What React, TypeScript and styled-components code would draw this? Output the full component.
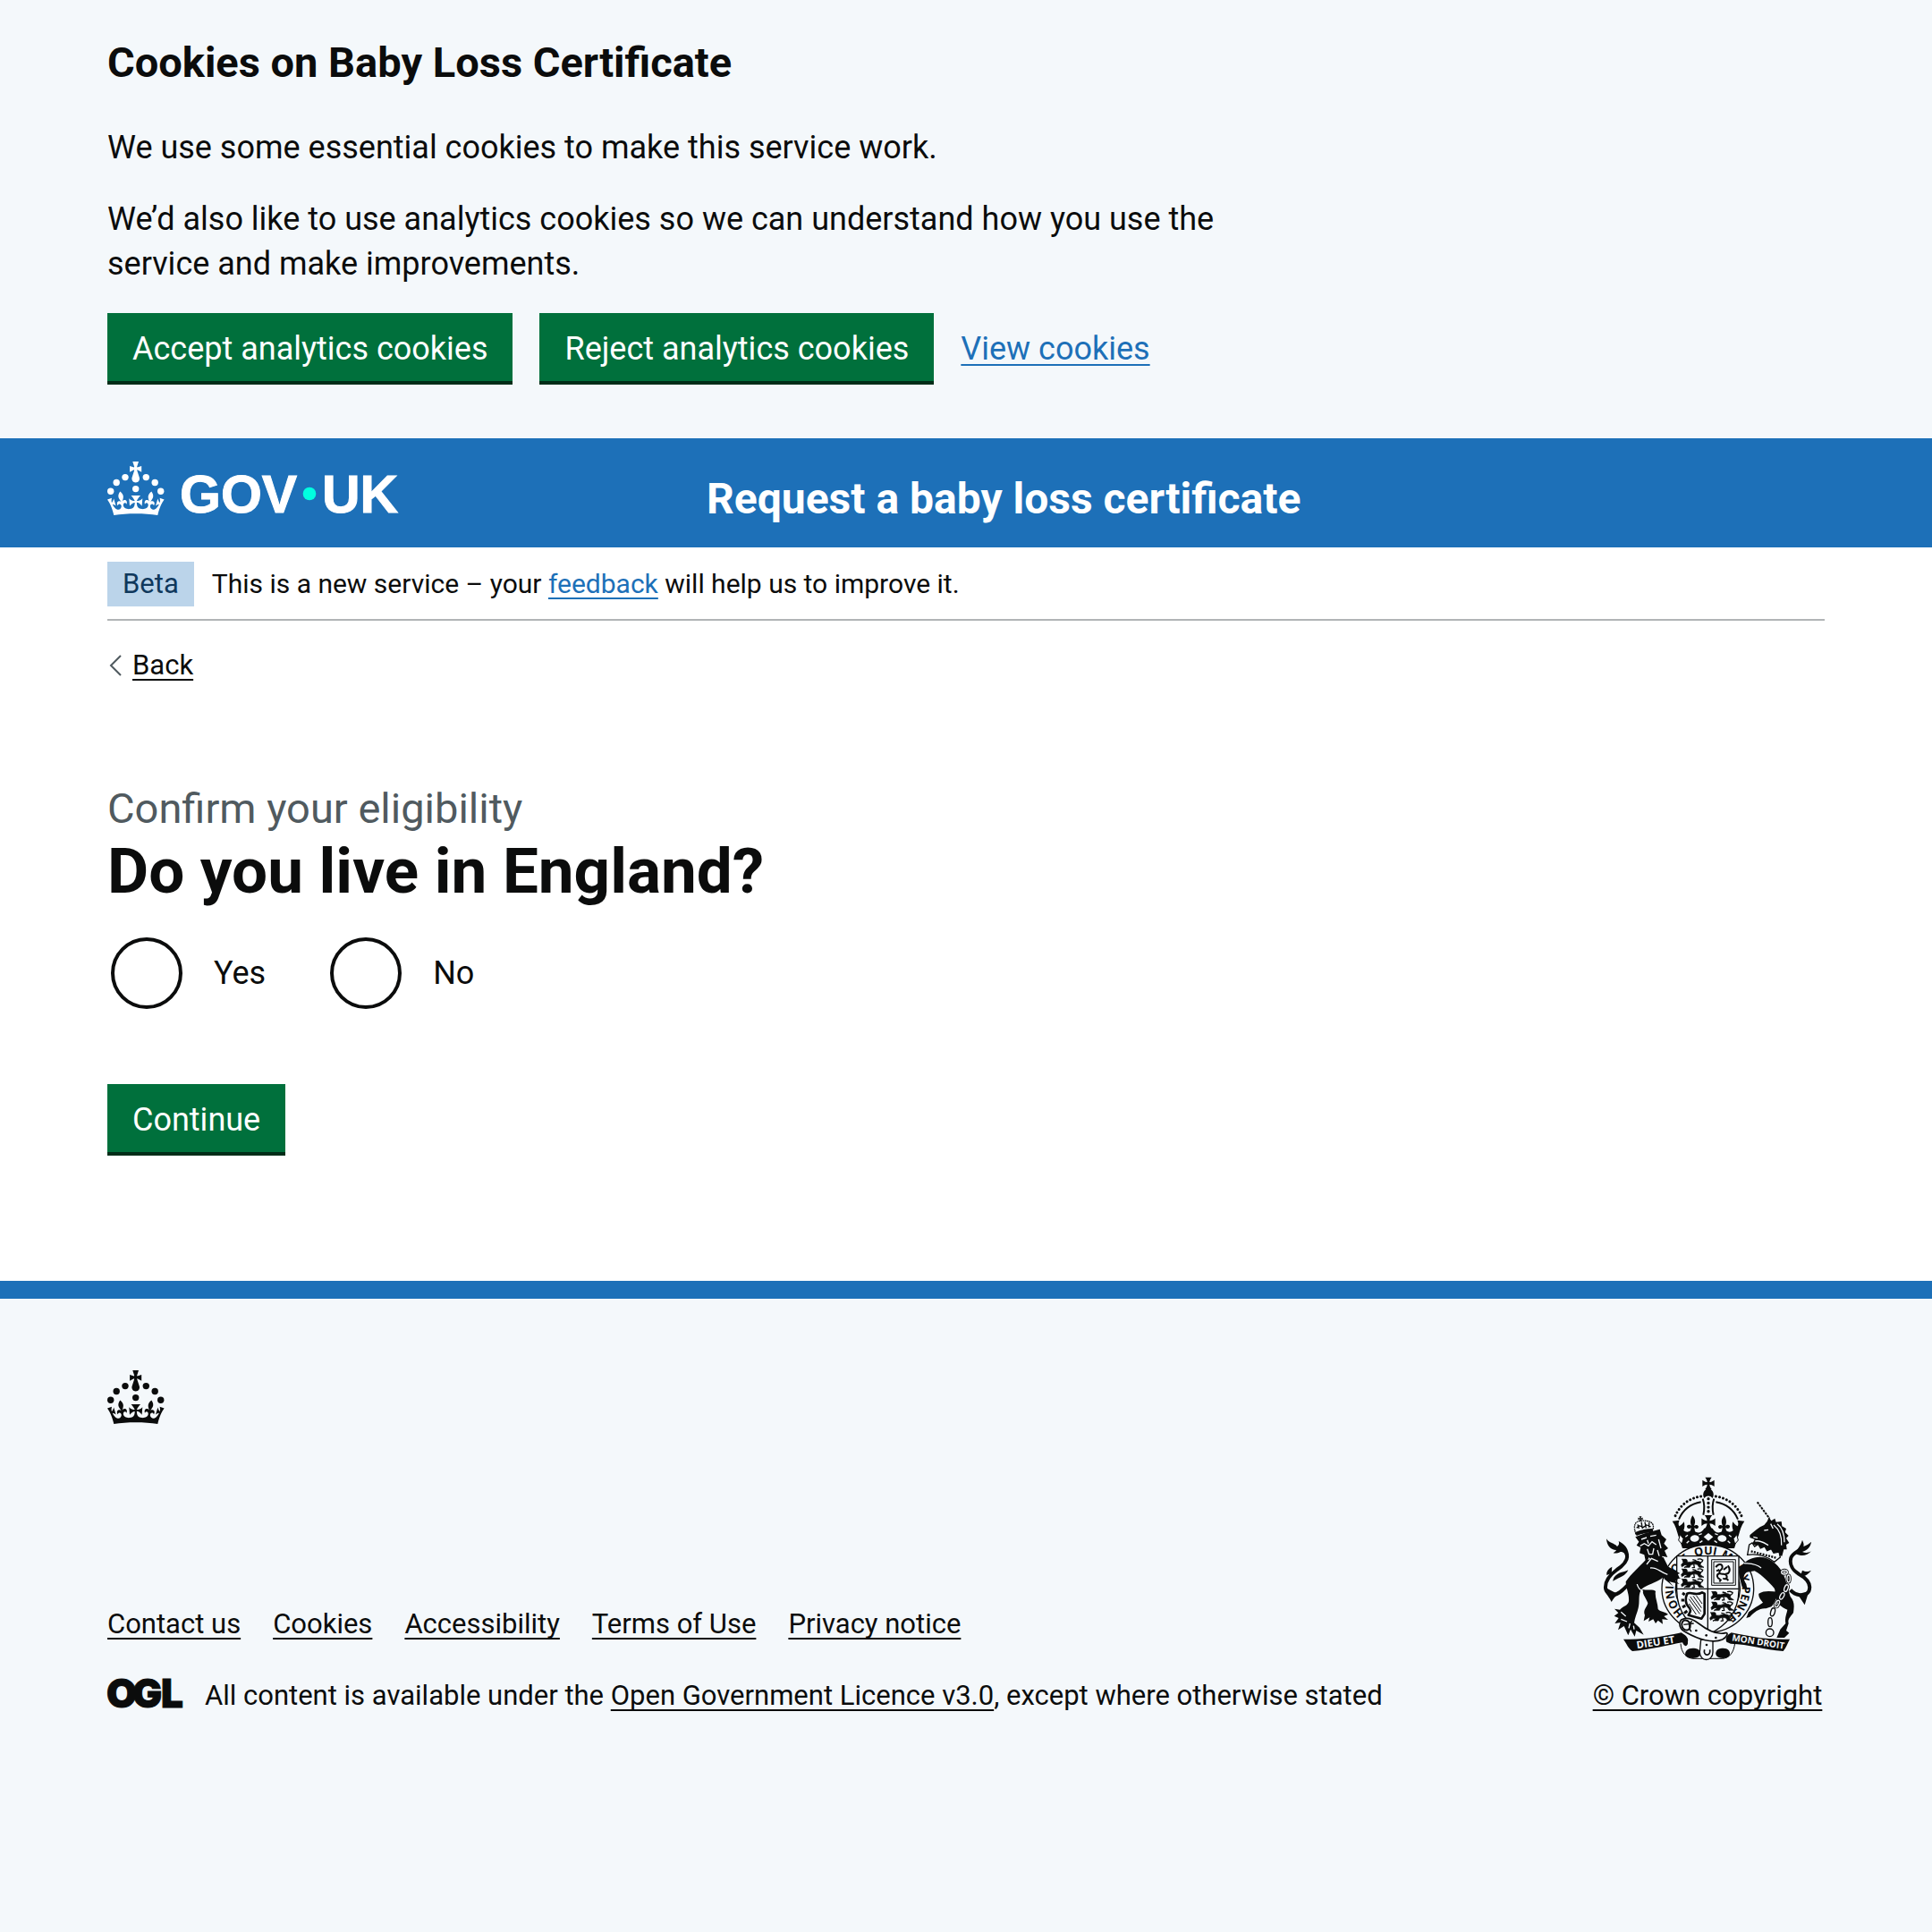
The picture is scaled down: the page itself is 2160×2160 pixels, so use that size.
import React from "react";
import styled, { createGlobalStyle } from "styled-components";

const colour = {
  text: "#0b0c0c",
  secondary: "#505a5f",
  blue: "#1d70b8",
  surface: "#f4f8fb",
  border: "#b1b4b6",
  green: "#00703c",
  greenShadow: "#002d18",
};

const GlobalStyle = createGlobalStyle`
  *, *::before, *::after { box-sizing: border-box; }
  html { background: ${colour.surface}; }
  body {
    margin: 0;
    color: ${colour.text};
    font-family: Roboto, "Liberation Sans", Arial, sans-serif;
    font-size: 36px;
    line-height: 50px;
  }
  h1, h2, p, ul, fieldset { margin: 0; padding: 0; }
`;

const Page = styled.div`
  display: flex;
  flex-direction: column;
  min-height: 100vh;
  background: #fff;
`;

const Container = styled.div`
  width: 100%;
  max-width: 2160px;
  margin: 0 auto;
  padding: 0 120px;
`;

const Link = styled.a<{ $tone?: "text" | "link" }>`
  color: ${(p) => (p.$tone === "link" ? colour.blue : colour.text)};
  text-decoration: underline;
  text-decoration-thickness: 2px;
  text-underline-offset: 5px;
  text-decoration-skip-ink: none;
`;

const Button = styled.button`
  height: 76px;
  margin: 0 0 4px;
  padding: 3px 28px 0;
  border: 0;
  border-radius: 0;
  background: ${colour.green};
  box-shadow: 0 4px 0 ${colour.greenShadow};
  color: #fff;
  font: inherit;
  cursor: pointer;
`;

/* Cookie banner */

const CookieBanner = styled.section`
  padding: 40px 0 60px;
  background: ${colour.surface};
`;

const CookieTitle = styled.h2`
  margin-bottom: 40px;
  font-size: 47px;
  line-height: 60px;
`;

const CookieCopy = styled.div`
  display: grid;
  gap: 30px;
  max-width: 1290px;
  margin-bottom: 30px;
`;

const CookieActions = styled.div`
  display: flex;
  flex-wrap: wrap;
  align-items: center;
  gap: 30px;
`;

/* Header */

const Header = styled.header`
  padding: 26px 0 24px;
  background: ${colour.blue};
  color: #fff;
`;

const HeaderGrid = styled.div`
  display: grid;
  grid-template-columns: 1fr 2fr;
`;

const HomeLink = styled.a`
  display: block;
  height: 72px;
  color: inherit;
`;

const ServiceName = styled.a`
  margin: 12px 0 0 30px;
  color: inherit;
  font-size: 48px;
  font-weight: 700;
  line-height: 60px;
  text-decoration: none;
`;

/* Phase banner and back link */

const PhaseBanner = styled.div`
  display: flex;
  align-items: center;
  gap: 20px;
  padding: 16px 0 14px;
  border-bottom: 2px solid ${colour.border};
  font-size: 30px;
`;

const PhaseTag = styled.strong`
  padding: 0 17px;
  background: #bbd4ea;
  color: #0f385c;
  font-size: 31px;
  font-weight: 400;
`;

const BackRow = styled.nav`
  display: flex;
  align-items: center;
  gap: 12px;
  margin-top: 30px;
  font-size: 31px;
  line-height: 40px;
`;

const BackArrow = styled.svg`
  width: 16px;
  height: 24px;
`;

/* Question */

const Main = styled.main`
  padding: 110px 0 140px;
`;

const Caption = styled.span`
  display: block;
  margin-bottom: 2px;
  color: ${colour.secondary};
  font-size: 47px;
  line-height: 60px;
`;

const Question = styled.fieldset`
  min-width: 0;
  border: 0;
`;

const Legend = styled.legend`
  padding: 0;
`;

const Title = styled.h1`
  font-size: 71px;
  line-height: 76px;
`;

const Options = styled.div`
  display: flex;
  flex-wrap: wrap;
  gap: 72px;
  margin: 36px 0 84px;
  padding-left: 4px;
`;

const Option = styled.label`
  display: flex;
  align-items: center;
  gap: 35px;
  cursor: pointer;
`;

const Radio = styled.input`
  appearance: none;
  width: 80px;
  height: 80px;
  margin: 0;
  border: 4px solid ${colour.text};
  border-radius: 50%;
  background: #fff;
  &:checked { box-shadow: inset 0 0 0 16px #fff; background: ${colour.text}; }
`;

/* Footer */

const Footer = styled.footer`
  flex: 1;
  padding: 80px 0;
  border-top: 20px solid ${colour.blue};
  background: ${colour.surface};
  font-size: 31px;
  line-height: 40px;
`;

const CrownMark = styled.svg`
  display: block;
  width: 64px;
  height: 60px;
`;

const FooterMeta = styled.div`
  display: flex;
  align-items: flex-end;
  justify-content: space-between;
  gap: 60px;
  margin-top: 59px;
`;

const FooterLinks = styled.ul`
  display: flex;
  flex-wrap: wrap;
  gap: 20px 36px;
  margin-bottom: 40px;
  list-style: none;
`;

const Licence = styled.div`
  display: flex;
  align-items: center;
  gap: 27px;
`;

const OglMark = styled.svg`
  flex: none;
  width: 82px;
  height: 40px;
  overflow: visible;
`;

const Copyright = styled.div`
  display: flex;
  flex: none;
  flex-direction: column;
  align-items: center;
  gap: 21px;
  min-width: 262px;
`;

const CrestImage = styled.svg`
  display: block;
  width: 250px;
  height: 204px;
  overflow: visible;
`;

function CrownShape() {
  return (
    <g fill="currentColor">
      <circle cx="20" cy="17.6" r="3.7" />
      <circle cx="10.2" cy="23.5" r="3.7" />
      <circle cx="3.7" cy="33.2" r="3.7" />
      <circle cx="31.7" cy="30.6" r="3.7" />
      <circle cx="43.3" cy="17.6" r="3.7" />
      <circle cx="53.2" cy="23.5" r="3.7" />
      <circle cx="59.7" cy="33.2" r="3.7" />
      <path d="M33.1,9.8c.2-.1.3-.3.5-.5l4.6,2.4v-6.8l-4.6,1.5c-.1-.2-.3-.3-.5-.5l1.9-5.9h-6.7l1.9,5.9c-.2.1-.3.3-.5.5l-4.6-1.5v6.8l4.6-2.4c.1.2.3.3.5.5l-2.6,8c-.9,2.8,1.2,5.7,4.1,5.7h0c3,0,5.1-2.9,4.1-5.7l-2.6-8ZM37,37.9s-3.4,3.8-4.1,6.1c2.2,0,4.2-.5,6.4-2.8l-.7,8.5c-2-2.8-4.4-4.1-5.7-3.8.1,3.1.5,6.7,5.8,7.2,3.7.3,6.7-1.5,7-3.8.4-2.6-2-4.3-3.7-1.6-1.4-4.5,2.4-6.1,4.9-3.2-1.9-4.5-1.8-7.7,2.4-10.9,3,4,2.6,7.3-1.2,11.1,2.4-1.3,6.2,0,4,4.6-1.2-2.8-3.7-2.2-4.2.2-.3,1.7.7,3.7,3,4.2,1.9.3,4.7-.9,7-5.9-1.3,0-2.4.7-3.9,1.7l2.4-8c.6,2.3,1.4,3.7,2.2,4.5.6-1.6.5-2.8,0-5.3l5,1.8c-2.6,3.6-5.2,8.7-7.3,17.5-7.4-1.1-15.7-1.7-24.5-1.7h0c-8.8,0-17.1.6-24.5,1.7-2.1-8.9-4.7-13.9-7.3-17.5l5-1.8c-.5,2.5-.6,3.7,0,5.3.8-.8,1.6-2.3,2.2-4.5l2.4,8c-1.5-1-2.6-1.7-3.9-1.7,2.3,5,5.2,6.2,7,5.9,2.3-.4,3.3-2.4,3-4.2-.5-2.4-3-3.1-4.2-.2-2.2-4.6,1.6-6,4-4.6-3.7-3.7-4.2-7.1-1.2-11.1,4.2,3.2,4.3,6.4,2.4,10.9,2.5-2.8,6.3-1.3,4.9,3.2-1.8-2.7-4.1-1-3.7,1.6.3,2.3,3.3,4.1,7,3.8,5.4-.5,5.7-4.2,5.8-7.2-1.3-.2-3.7,1-5.7,3.8l-.7-8.5c2.2,2.3,4.2,2.7,6.4,2.8-.7-2.3-4.1-6.1-4.1-6.1h10.6,0Z" />
    </g>
  );
}

function GovUkLogo() {
  return (
    <svg width="330" height="72" viewBox="0 0 330 72" role="img" aria-label="GOV.UK">
      <CrownShape />
      <g fill="currentColor" stroke="currentColor" strokeWidth="1" fontFamily='"Liberation Sans", Arial, sans-serif' fontSize="59" fontWeight="700">
        <text x="81" y="57">GOV</text>
        <text x="240" y="57">UK</text>
      </g>
      <circle cx="226" cy="36" r="7.3" fill="#00ffe0" />
    </svg>
  );
}

/* A lion passant, as it appears three times in the quarters of England. */
function PassantLion({ x, y }: { x: number; y: number }) {
  return (
    <g transform={`translate(${x} ${y})`}>
      <circle cx="15" cy="9" r="8" />
      <path d="M4 2 L12 3 L10 12 Z M8 14 C20 8 30 16 42 10 C54 6 62 10 68 14 L66 22 L78 30 L62 30 L56 21 C46 18 40 20 34 22 L30 30 L18 30 L24 23 L14 22 L4 28 L2 21 Z" stroke={colour.text} strokeWidth="2" />
      <path d="M66 14 C82 8 70 -1 56 3 M40 4 L52 7 M66 2 L76 6 M24 24 L12 31 M44 20 L46 30 L38 31" fill="none" stroke={colour.text} strokeWidth="4" />
    </g>
  );
}

function CrossPattee({ x, y, s }: { x: number; y: number; s: number }) {
  return (
    <path
      transform={`translate(${x} ${y}) scale(${s})`}
      d="M-11 -20 H11 C6 -14 4 -8 4 -4 C8 -4 14 -6 20 -11 V11 C14 6 8 4 4 4 C4 8 6 14 11 20 H-11 C-6 14 -4 8 -4 4 C-8 4 -14 6 -20 11 V-11 C-14 -6 -8 -4 -4 -4 C-4 -8 -6 -14 -11 -20 Z"
    />
  );
}

/* One side of the imperial crown; the other side is its mirror image. */
function CrownHalf() {
  return (
    <g>
      <path d="M428 126 C385 132 352 160 338 202" fill="none" stroke={colour.text} strokeWidth="9" strokeLinecap="round" strokeDasharray="0.1 12.4" />
      <path d="M428 145 C393 151 367 173 354 203" fill="none" stroke={colour.text} strokeWidth="6" />
      <path d="M434 134 C440 150 440 170 436 188" stroke={colour.text} strokeWidth="6" fill="none" />
      <path d="M332 209 L356 206 C352 214 352 220 355 226 C362 222 368 216 371 211 C374 221 374 231 370 240 C376 246 386 247 393 241 L395 231 C389 237 380 234 381 225 C386 219 392 221 396 225 C390 212 394 200 400 190 C409 201 411 212 405 225 C411 220 418 222 420 227 C420 235 412 237 406 231 L408 243 C418 252 432 246 439 233 L454 233 L454 300 L366 300 C362 290 360 276 352 258 C347 240 343 224 332 209 Z" />
      <path d="M358 254 L369 268 L364 286 L353 273 Z" fill={colour.surface} stroke={colour.text} strokeWidth="3" />
      <ellipse cx="407" cy="267" rx="15" ry="11" fill={colour.surface} transform="rotate(-6 407 267)" />
      <path d="M376 262 L384 256 M380 283 L388 275 M421 255 L431 251 M424 281 L433 275" stroke={colour.surface} strokeWidth="4" />
    </g>
  );
}

function RoyalArms() {
  return (
    <CrestImage viewBox="75 60 750 612" fill={colour.text} aria-hidden="true">
      {/* Imperial crown */}
      <CrossPattee x={453} y={82} s={1} />
      <path d="M453 98 C470 103 474 120 467 132 C459 122 447 122 439 132 C432 120 436 103 453 98 Z" />
      <CrownHalf />
      <g transform="translate(906 0) scale(-1 1)">
        <CrownHalf />
      </g>
      <path d="M453 134 V186" stroke={colour.text} strokeWidth="10" strokeLinecap="round" strokeDasharray="0.1 14" />
      <CrossPattee x={453} y={212} s={1.15} />
      <path d="M453 249 L469 262 L453 275 L437 262 Z" fill={colour.surface} />

      {/* Garter */}
      <ellipse cx="451" cy="435" rx="154" ry="147" fill={colour.surface} stroke={colour.text} strokeWidth="4" />
      <ellipse cx="451" cy="435" rx="108" ry="106" fill={colour.surface} stroke={colour.text} strokeWidth="4" />
      <path id="garter" d="M451 549 A115 114 0 0 1 451 321 A115 114 0 0 1 451 549" fill="none" />
      <g fontFamily='"Open Sans", "Noto Sans", sans-serif' fontSize="38" fontWeight="700">
        <text><textPath href="#garter" startOffset="12%">HONI</textPath></text>
        <text><textPath href="#garter" startOffset="29%">SOIT</textPath></text>
        <text><textPath href="#garter" startOffset="44%">QUI</textPath></text>
        <text><textPath href="#garter" startOffset="56%">MAL</textPath></text>
        <text><textPath href="#garter" startOffset="69%">Y</textPath></text>
        <text><textPath href="#garter" startOffset="74%">PENSE</textPath></text>
      </g>

      {/* Shield */}
      <path d="M347 326 H555 V436 C556 510 515 560 451 590 C386 560 346 510 347 436 Z" fill={colour.surface} stroke={colour.text} strokeWidth="4" />
      <path d="M451 326 V590 M347 436 H555" stroke={colour.text} strokeWidth="4" fill="none" />
      <PassantLion x={360} y={334} />
      <PassantLion x={360} y={367} />
      <PassantLion x={360} y={401} />
      <PassantLion x={460} y={443} />
      <PassantLion x={460} y={478} />
      <PassantLion x={456} y={513} />
      <path d="M464 338 H544 V424 H464 Z" fill="none" stroke={colour.text} strokeWidth="3" />
      <path d="M471 345 H537 V417 H471 Z" fill="none" stroke={colour.text} strokeWidth="3" />
      <path d="M478 364 C486 350 500 352 500 364 C500 374 488 372 490 382 C494 392 508 380 514 392 C518 402 508 406 502 400 M490 384 C478 388 482 400 492 404 M504 372 L516 362 M510 386 C526 386 528 368 518 358 M480 376 L490 372 M496 404 L490 412 M512 400 L520 408" fill="none" stroke={colour.text} strokeWidth="6" />
      <path d="M382 452 C396 444 410 462 432 448 L440 452 V520 L430 536 L386 524 C394 512 396 506 386 496 C376 486 374 468 382 452 Z" fill="none" stroke={colour.text} strokeWidth="8" strokeLinejoin="round" />
      <path d="M388 470 L424 520 M392 462 L428 512 M402 460 L430 500 M412 458 L432 486 M388 486 L412 522" stroke={colour.text} strokeWidth="3" />
      <path d="M374 456 L366 450 M372 474 L362 474 M376 492 L366 498 M382 510 L372 518" stroke={colour.text} strokeWidth="9" />

      {/* Scroll and buckle of the garter */}
      <path d="M360 620 C362 650 378 668 402 670 H500 C524 668 538 650 542 618" fill={colour.surface} stroke={colour.text} strokeWidth="3" />
      <path d="M376 660 C372 642 388 632 410 636 C426 638 432 656 420 664 C408 672 384 670 376 660 Z" />
      <path d="M524 660 C530 642 514 632 494 636 C478 638 472 656 484 664 C496 672 516 670 524 660 Z" />
      <path d="M428 606 H468 V648 C468 682 424 682 424 648 Z" fill={colour.surface} stroke={colour.text} strokeWidth="4" />
      <path d="M440 640 C434 662 462 664 458 640" fill="none" stroke={colour.text} strokeWidth="5" />
      <path d="M362 540 C382 528 404 540 420 552 C446 572 480 592 510 584 C524 582 512 600 500 606 C468 620 420 606 378 582 C356 572 352 552 362 540 Z" fill={colour.surface} stroke={colour.text} strokeWidth="5" />
      <ellipse cx="378" cy="558" rx="14" ry="17" fill="none" stroke={colour.text} strokeWidth="6" transform="rotate(-20 378 558)" />
      <path d="M370 556 L404 552 M398 544 C386 552 386 570 396 580" stroke={colour.text} strokeWidth="4" fill="none" />
      <circle cx="412" cy="576" r="4" />
      <circle cx="446" cy="592" r="4" />
      <circle cx="447" cy="624" r="4" />
      <circle cx="478" cy="600" r="4" />

      {/* Lion */}
      <path d="M150 306 C164 300 174 308 178 318 C186 336 170 356 146 372 C124 388 106 408 108 434 C112 458 138 462 158 446 C176 432 196 410 214 388" fill="none" stroke={colour.text} strokeWidth="12" />
      <path d="M111 268 C120 284 138 282 147 294 C153 290 155 284 152 276 C170 284 188 302 186 332 C178 316 166 312 158 312 C150 316 142 318 134 316 C138 312 142 310 144 306 C126 306 112 292 111 268 Z" />
      <path d="M136 398 C152 378 166 382 184 373 C176 392 156 398 132 410 Z M112 390 C110 378 118 368 130 362 L128 384 Z M104 430 C106 452 122 466 128 480 C134 470 140 462 150 454 Z" />
      <path d="M242 340 C222 362 194 386 176 412 C176 434 188 452 186 478 C184 492 168 494 156 506 L138 503 L151 517 L137 527 L152 534 L139 552 L158 549 L150 574 L170 561 L184 592 L192 572 L206 596 L211 576 L236 590 L222 566 L204 550 C206 532 214 518 218 500 C224 478 216 458 228 438 C246 420 276 418 300 398 L340 412 L356 398 L346 378 L318 362 L302 330 Z" />
      <path d="M232 438 C250 442 268 436 276 444 C272 462 284 484 284 504 C294 516 306 510 318 522 L304 528 L318 540 L298 538 L300 554 L284 542 L276 552 L268 538 L252 546 L256 532 L236 544 L240 524 C232 508 248 496 250 484 C244 466 232 456 232 438 Z" />
      <path d="M318 362 L358 384 L336 392 L362 402 L334 402 L356 420 L322 412 L336 428 L304 402 Z" />
      <path d="M208 262 L240 250 L290 236 L296 256 L312 270 L304 284 L318 300 L306 308 L316 330 L298 326 L300 344 L280 336 L268 350 L254 330 L244 350 L238 322 L222 316 L226 298 L212 290 L220 278 Z" />
      <path d="M228 270 L246 264 M258 260 L278 256 M224 292 L238 284 L252 292 L264 278 L278 288 M248 302 L254 320 L266 320 L270 300 M286 270 L294 300 M282 306 L288 326 M248 272 L252 284 M246 354 L262 334 L284 344" fill="none" stroke={colour.surface} strokeWidth="4" />
      <path d="M210 252 C200 226 206 210 224 208 C240 206 256 208 264 216 C272 226 268 238 262 244 Z" fill={colour.surface} stroke={colour.text} strokeWidth="4" strokeDasharray="5 2" />
      <path d="M208 246 C226 238 246 234 266 234 L268 246 C246 246 228 252 212 258 Z" />
      <path d="M216 220 L220 234 M228 212 L232 234 M240 212 L244 232 M254 214 L254 230 M212 232 L222 224 L234 230 L246 222 L260 228" fill="none" stroke={colour.text} strokeWidth="4" />
      <CrossPattee x={225} y={201} s={0.4} />
      <path d="M214 420 C216 432 222 438 232 444 C226 456 228 470 224 484 M258 366 C280 362 290 380 316 388" fill="none" stroke={colour.surface} strokeWidth="4" />
      <path d="M160 514 L176 528 M160 538 L180 546 M186 568 L190 552 M204 572 L202 560" stroke={colour.surface} strokeWidth="4" />

      {/* Unicorn */}
      <path d="M617 145 L658 200" stroke={colour.text} strokeWidth="6" strokeDasharray="8 3" />
      <path d="M592 256 C606 244 620 230 640 222 L650 210 L656 196 L664 208 L676 200 L680 212 L698 210 L700 226 L714 234 L710 246 L722 258 L714 266 L724 282 L714 288 L716 304 L706 304 L700 326 L684 322 C664 308 640 302 622 294 L600 286 L608 270 L592 264 Z" />
      <path d="M590 288 L600 282 L608 294 L620 286 L628 300 L642 294 L650 308 L664 302 L672 316 L690 312 L694 330 L674 346 C648 326 614 318 584 322 Z" fill={colour.surface} stroke={colour.text} strokeWidth="4" />
      <path d="M596 310 L680 332" stroke={colour.text} strokeWidth="7" strokeDasharray="6 4" />
      <path d="M640 240 L654 238 M604 262 L618 266 M610 276 C628 272 640 282 654 290 M672 222 C690 236 700 260 698 290 M684 218 C702 232 708 256 708 280 M662 218 L670 234" fill="none" stroke={colour.surface} strokeWidth="4" />
      <path d="M566 356 C586 334 622 320 654 336 C688 352 706 382 714 414 C722 432 722 448 728 462 C744 480 740 500 738 516 C728 530 718 538 722 552 L714 576 L724 584 L708 600 L682 600 L694 572 L712 552 C708 532 716 520 718 506 C700 498 688 490 680 470 C672 454 680 444 674 434 C656 414 636 392 608 376 L582 380 C566 390 572 408 580 420 L584 440 L566 430 L558 400 C554 380 552 366 566 356 Z" />
      <path d="M622 452 C640 440 664 444 684 446 C684 466 676 482 664 496 L646 502 C624 500 608 514 592 530 L580 534 L588 514 C602 502 620 494 636 482 C628 472 620 464 622 452 Z" />
      <path d="M572 350 C590 352 612 350 630 366" fill="none" stroke={colour.surface} strokeWidth="4" />
      <path d="M728 440 C742 456 776 468 790 444 C800 418 778 398 756 386 C736 374 724 354 730 332 C736 316 752 312 766 300" fill="none" stroke={colour.text} strokeWidth="12" />
      <path d="M798 278 C792 284 782 290 772 294 C774 286 772 282 768 272 C762 294 750 300 746 318 C764 328 784 326 798 310 C788 316 778 316 768 312 C782 306 796 298 798 278 Z M798 374 C788 378 780 380 768 374 L762 392 C776 396 788 388 798 374 Z M752 454 L776 490 L790 444 Z" />
      <g fill="none" stroke={colour.text} strokeWidth="9">
        <ellipse cx="708" cy="380" rx="10" ry="7" />
        <ellipse cx="722" cy="402" rx="5" ry="12" />
        <ellipse cx="714" cy="434" rx="6" ry="12" transform="rotate(20 714 434)" />
        <ellipse cx="700" cy="460" rx="6" ry="12" transform="rotate(28 700 460)" />
        <ellipse cx="684" cy="486" rx="6" ry="12" transform="rotate(25 684 486)" />
      </g>
      <g fill="none" stroke={colour.surface} strokeWidth="4">
        <ellipse cx="708" cy="380" rx="10" ry="7" />
        <ellipse cx="722" cy="402" rx="5" ry="12" />
        <ellipse cx="714" cy="434" rx="6" ry="12" transform="rotate(20 714 434)" />
        <ellipse cx="700" cy="460" rx="6" ry="12" transform="rotate(28 700 460)" />
        <ellipse cx="684" cy="486" rx="6" ry="12" transform="rotate(25 684 486)" />
      </g>
      <g fill="none" stroke={colour.text} strokeWidth="4">
        <ellipse cx="669" cy="514" rx="7" ry="14" transform="rotate(15 669 514)" />
        <ellipse cx="660" cy="548" rx="7" ry="15" />
        <circle cx="659" cy="583" r="13" />
      </g>

      {/* Motto */}
      <path d="M168 605 C240 608 300 596 362 583 C374 590 388 600 384 614 C386 626 374 636 366 616 C320 624 260 640 198 645 C184 636 178 618 168 605 Z" />
      <path d="M726 605 C650 608 596 596 530 583 C516 590 508 602 514 614 L528 620 C590 622 640 640 704 645 C714 634 718 618 726 605 Z" />
      <g fill={colour.surface} fontFamily='"Open Sans", "Noto Sans", sans-serif' fontSize="34" fontWeight="700">
        <text transform="translate(214 637) rotate(-9)">DIEU ET</text>
        <text transform="translate(531 610) rotate(9)" fontSize="30">MON DROIT</text>
      </g>
    </CrestImage>
  );
}

const footerLinks = ["Contact us", "Cookies", "Accessibility", "Terms of Use", "Privacy notice"];

export default function App() {
  return (
    <Page>
      <GlobalStyle />
      <CookieBanner aria-label="Cookies on Baby Loss Certificate">
        <Container>
          <CookieTitle>Cookies on Baby Loss Certificate</CookieTitle>
          <CookieCopy>
            <p>We use some essential cookies to make this service work.</p>
            <p>We’d also like to use analytics cookies so we can understand how you use the service and make improvements.</p>
          </CookieCopy>
          <CookieActions>
            <Button type="button">Accept analytics cookies</Button>
            <Button type="button">Reject analytics cookies</Button>
            <Link $tone="link" href="#cookies">View cookies</Link>
          </CookieActions>
        </Container>
      </CookieBanner>

      <Header>
        <Container>
          <HeaderGrid>
            <HomeLink href="#home"><GovUkLogo /></HomeLink>
            <ServiceName href="#service">Request a baby loss certificate</ServiceName>
          </HeaderGrid>
        </Container>
      </Header>

      <Container>
        <PhaseBanner>
          <PhaseTag>Beta</PhaseTag>
          <span>
            This is a new service – your <Link $tone="link" href="#feedback">feedback</Link> will help us to improve it.
          </span>
        </PhaseBanner>
        <BackRow aria-label="Back">
          <BackArrow viewBox="0 0 16 24" aria-hidden="true">
            <path d="M15 1 L4 12 L15 23" fill="none" stroke={colour.secondary} strokeWidth="2" />
          </BackArrow>
          <Link href="#back">Back</Link>
        </BackRow>
        <Main>
          <form onSubmit={(event) => event.preventDefault()}>
            <Question>
              <Legend>
                <Caption>Confirm your eligibility</Caption>
                <Title>Do you live in England?</Title>
              </Legend>
              <Options>
                <Option htmlFor="england-yes">
                  <Radio type="radio" id="england-yes" name="england" value="yes" />
                  Yes
                </Option>
                <Option htmlFor="england-no">
                  <Radio type="radio" id="england-no" name="england" value="no" />
                  No
                </Option>
              </Options>
            </Question>
            <Button type="submit">Continue</Button>
          </form>
        </Main>
      </Container>

      <Footer>
        <Container>
          <CrownMark viewBox="0 0 64 60" aria-hidden="true"><CrownShape /></CrownMark>
          <FooterMeta>
            <div>
              <FooterLinks>
                {footerLinks.map((label) => (
                  <li key={label}><Link href="#footer">{label}</Link></li>
                ))}
              </FooterLinks>
              <Licence>
                <OglMark viewBox="0 0 82 40" role="img" aria-label="Open Government Licence">
                  <text x="-1 28 60" y="33" fill="currentColor" stroke="currentColor" strokeWidth="1" fontFamily="Inter, sans-serif" fontSize="44" fontWeight="900">
                    OGL
                  </text>
                </OglMark>
                <span>
                  All content is available under the <Link href="#licence">Open Government Licence v3.0</Link>, except where otherwise stated
                </span>
              </Licence>
            </div>
            <Copyright>
              <RoyalArms />
              <Link href="#copyright">© Crown copyright</Link>
            </Copyright>
          </FooterMeta>
        </Container>
      </Footer>
    </Page>
  );
}
